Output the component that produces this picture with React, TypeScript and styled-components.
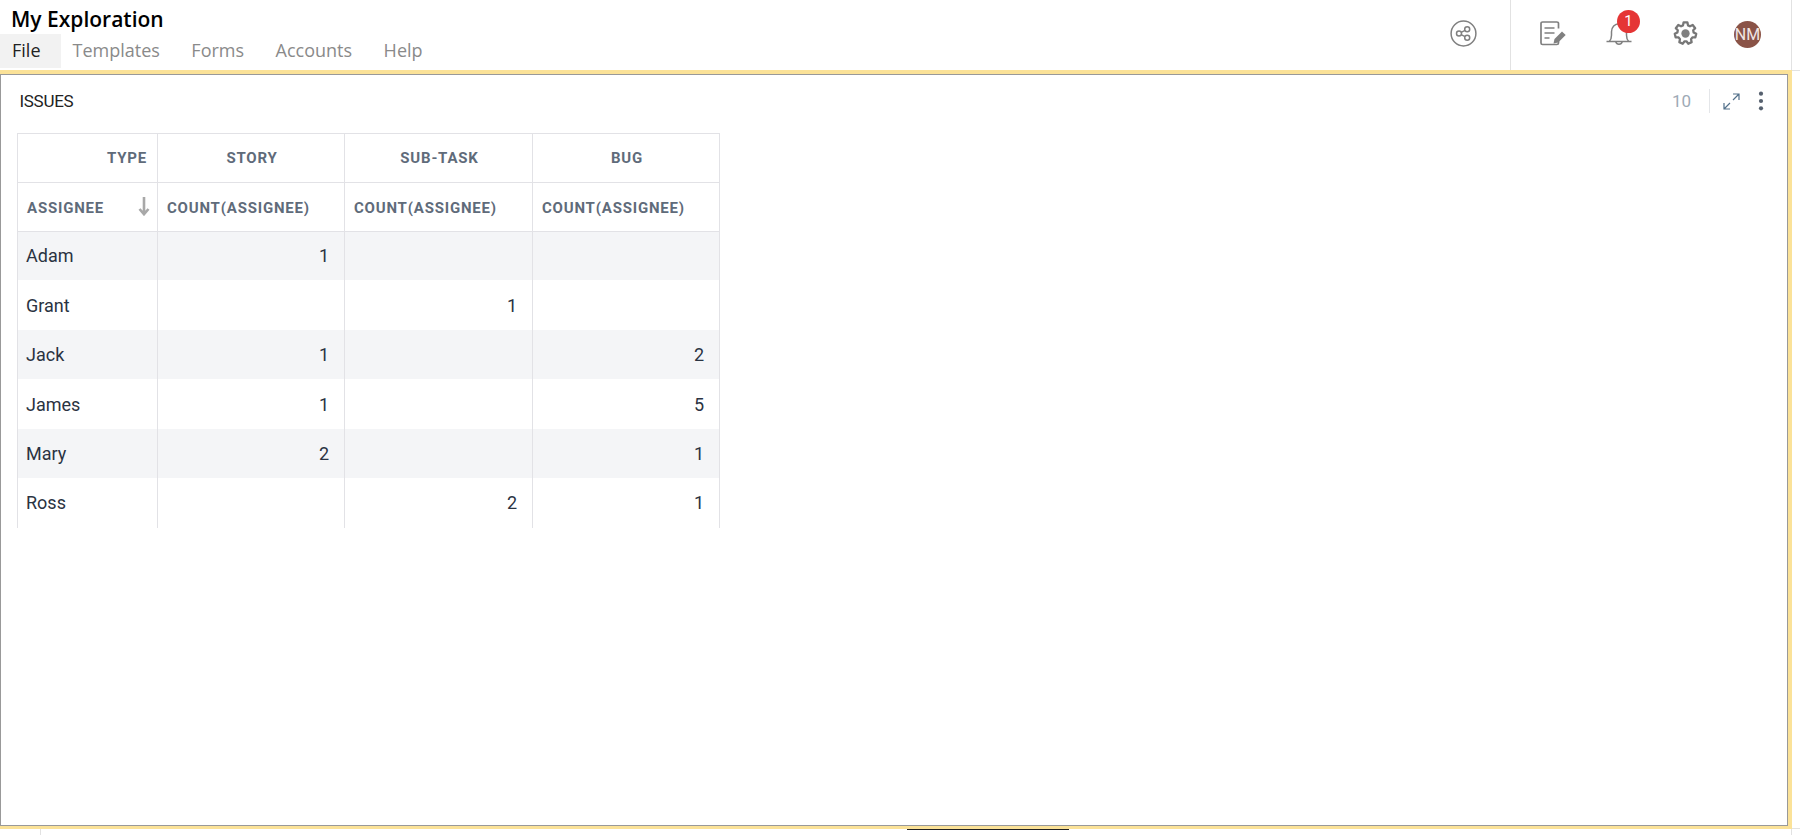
import React from "react";
import styled, { createGlobalStyle } from "styled-components";

const Global = createGlobalStyle`
  html, body { margin: 0; padding: 0; background: #fff; overflow: hidden; }
  body { font-family: "Roboto", "Liberation Sans", sans-serif; }
`;

const Page = styled.div`
  display: grid;
  grid-template-columns: 1792px 8px;
  grid-template-rows: 70px 759px 6px;
  width: 1800px;
  height: 835px;
`;

const Header = styled.header`
  display: flex;
  justify-content: space-between;
  border-right: 1px solid #e2e2e2;
`;

const Brand = styled.div`
  display: flex;
  flex-direction: column;
`;

const Title = styled.h1`
  margin: 0;
  padding: 5px 0 0 11px;
  height: 29px;
  font: 600 21px/29px "Open Sans", sans-serif;
  color: #000;
`;

const Menu = styled.nav`
  display: flex;
  height: 34px;
`;

const MenuItem = styled.div<{ $active?: boolean }>`
  display: flex;
  align-items: center;
  height: 34px;
  padding: ${(p) => (p.$active ? "0 20px 2px 12px" : "0 0 2px")};
  box-sizing: border-box;
  margin-right: ${(p) => (p.$active ? "12px" : "31.5px")};
  background: ${(p) => (p.$active ? "#f2f2f2" : "transparent")};
  color: ${(p) => (p.$active ? "#222" : "#8a8a8a")};
  font: 400 18px/32px "Open Sans", sans-serif;
`;

const Tools = styled.div`
  display: flex;
  align-items: stretch;
`;

const ShareBox = styled.div`
  width: 61px;
  padding-top: 20px;
  box-sizing: border-box;
  border-right: 1px solid #e2e2e2;
`;

const ToolRow = styled.div`
  display: flex;
  width: 280px;
  box-sizing: border-box;
  padding: 21px 0 0 29px;
`;

const ToolSlot = styled.div<{ $w: number }>`
  position: relative;
  width: ${(p) => p.$w}px;
  height: 30px;
`;

const Badge = styled.span`
  position: absolute;
  left: 11px;
  top: -11px;
  width: 23px;
  height: 23px;
  border-radius: 50%;
  background: #e53535;
  color: #fff;
  font: 400 15px/23px "Roboto", sans-serif;
  text-align: center;
`;

const Avatar = styled.div`
  width: 27px;
  height: 27px;
  border-radius: 50%;
  background: #8a5347;
  color: #f0e6e4;
  font: 400 16px/27px "Roboto", sans-serif;
  text-align: center;
  white-space: nowrap;
`;

const Panel = styled.main`
  border-style: solid;
  border-color: #fbe298;
  border-width: 4px 4px 3px 0;
  min-width: 0;
`;

const PanelInner = styled.div`
  height: 100%;
  box-sizing: border-box;
  border: 1px solid #999;
  background: #fff;
  padding-left: 16px;
`;

const PanelHead = styled.div`
  display: flex;
  align-items: center;
  height: 58px;
  padding-bottom: 6px;
  box-sizing: border-box;
`;

const PanelTitle = styled.div`
  flex: 1;
  padding-left: 2.5px;
  font: 400 17px/20px "Roboto", sans-serif;
  letter-spacing: -0.3px;
  color: #222;
`;

const Count = styled.span`
  font: 400 17px/20px "Roboto", sans-serif;
  color: #9eaab6;
  margin-right: 18px;
`;

const VRule = styled.span`
  width: 1px;
  height: 24px;
  background: #e4e6e9;
  margin-right: 13px;
`;

const Kebab = styled.span`
  display: flex;
  margin: 0 23px 0 18px;
`;

const Table = styled.div`
  display: grid;
  grid-template-columns: 140px 187px 188px 187px;
  grid-template-rows: 49px 48px;
  grid-auto-rows: 49.45px;
  width: 702px;
  border-left: 1px solid #e2e2e6;
  border-top: 1px solid #e2e2e6;
`;

const headPadding = { left: "2px 8px 0 9px", center: "0 8px 0 10px", right: "0 10px 0 8px" };

const HeadCell = styled.div<{ $align: "left" | "center" | "right" }>`
  position: relative;
  z-index: 1;
  display: flex;
  align-items: center;
  justify-content: ${(p) => (p.$align === "left" ? "flex-start" : p.$align === "right" ? "flex-end" : "center")};
  margin-bottom: ${(p) => (p.$align === "left" ? "-1px" : "0")};
  padding: ${(p) => headPadding[p.$align]};
  box-sizing: border-box;
  border-right: 1px solid #e2e2e6;
  border-bottom: 1px solid #e2e2e6;
  background: #fff;
  font: 700 15px/18px "Roboto", sans-serif;
  letter-spacing: 0.8px;
  color: #5f6b7a;
  white-space: nowrap;
`;

const SortIcon = styled.span`
  position: absolute;
  right: 7px;
  top: 14px;
  display: flex;
`;

const Cell = styled.div<{ $alt: boolean; $num?: boolean }>`
  display: flex;
  align-items: center;
  justify-content: ${(p) => (p.$num ? "flex-end" : "flex-start")};
  padding: ${(p) => (p.$num ? "1px 15px 0 8px" : "1px 8px 0")};
  box-sizing: border-box;
  border-right: 1px solid #e2e2e6;
  background: ${(p) => (p.$alt ? "#f4f5f7" : "#fff")};
  font: 400 18px/24px "Roboto", sans-serif;
  color: #2a3342;
`;

const GutterTop = styled.div``;

const GutterMid = styled.div`
  border-top: 1px solid #e2e2e2;
  border-bottom: 1px solid #e2e2e2;
`;

const GutterEnd = styled.div``;

const Footer = styled.footer`
  display: flex;
  align-items: flex-start;
  border-right: 1px solid #e2e2e2;
`;

const FooterStub = styled.div`
  width: 40px;
  height: 100%;
  border-right: 1px solid #e2e2e2;
`;

const FooterBar = styled.div`
  width: 162px;
  height: 1px;
  margin-left: 866px;
  background: #222;
`;

const ShareIcon = () => (
  <svg width="27" height="27" viewBox="0 0 27 27" fill="none" stroke="#808080" strokeWidth="1.5">
    <circle cx="13.5" cy="13.5" r="12.4" />
    <circle cx="9" cy="13.5" r="2.5" />
    <circle cx="17.2" cy="9.2" r="2.5" />
    <circle cx="17.2" cy="17.8" r="2.5" />
    <path d="M11.2 12.3l3.8-2M11.2 14.7l3.8 2" />
  </svg>
);

const NoteIcon = () => (
  <svg width="27" height="25" viewBox="0 0 27 25" fill="none" stroke="#808080" strokeWidth="1.7">
    <path d="M18.5 7.5V2.6A1.6 1.6 0 0 0 16.9 1H2.6A1.6 1.6 0 0 0 1 2.6v19.3A1.6 1.6 0 0 0 2.6 23.5h14.3A1.6 1.6 0 0 0 18.5 21.9V20" />
    <path d="M4.5 7h10M4.5 12h10M4.5 17h5" />
    <path d="M13.5 22.5l1-4.5 7.5-7.5 3.7 3.5-7.5 7.5z" fill="#808080" stroke="none" />
  </svg>
);

const BellIcon = () => (
  <svg width="26" height="26" viewBox="0 0 26 26" fill="none" stroke="#808080" strokeWidth="1.5">
    <path d="M.5 20.5h25M3.2 20.5c1.6-1.4 2.3-3.6 2.3-6.2v-3.6c0-4.6 3.3-8 7.5-8s7.5 3.4 7.5 8v3.6c0 2.6.7 4.8 2.3 6.2" />
    <path d="M9.8 20.7a3.3 3.3 0 0 0 6.4 0" />
  </svg>
);

const GearIcon = () => (
  <svg width="25" height="25" viewBox="0 0 24 24" fill="none" stroke="#777" strokeWidth="2.2" strokeLinejoin="round">
    <path d="M10.2 1.3h3.6l.6 2.9 1.9.9 2.6-1.3 2.4 3.1-1.9 2 .4 2.1 2.5 1.3-.8 3.4-2.9.1-1.3 1.6.6 2.9-3.2 1.5-1.8-2.3h-1.8l-1.8 2.3-3.2-1.5.6-2.9-1.3-1.6-2.9-.1-.8-3.4 2.5-1.3.4-2.1-1.9-2 2.4-3.1 2.6 1.3 1.9-.9z" />
    <circle cx="12" cy="12" r="4" fill="#808080" stroke="none" />
  </svg>
);

const ExpandIcon = () => (
  <svg width="17" height="17" viewBox="0 0 17 17" fill="none" stroke="#52708a" strokeWidth="1.2">
    <path d="M10 1h6v6M16 1L10 7M1 10v6h6M1 16l6-6" />
  </svg>
);

const KebabIcon = () => (
  <svg width="6" height="20" viewBox="0 0 6 20" fill="#55606e">
    <circle cx="3" cy="2.7" r="2.1" />
    <circle cx="3" cy="10" r="2.1" />
    <circle cx="3" cy="17.3" r="2.1" />
  </svg>
);

const ArrowIcon = () => (
  <svg width="12" height="19" viewBox="0 0 12 19" fill="none" stroke="#a8a8a8" strokeWidth="2.6">
    <path d="M6 0v17M1.5 12L6 17.2 10.500 12" />
  </svg>
);

const rows: [string, string, string, string][] = [
  ["Adam", "1", "", ""],
  ["Grant", "", "1", ""],
  ["Jack", "1", "", "2"],
  ["James", "1", "", "5"],
  ["Mary", "2", "", "1"],
  ["Ross", "", "2", "1"],
];

export default function App() {
  return (
    <>
      <Global />
      <Page>
        <Header>
          <Brand>
            <Title>My Exploration</Title>
            <Menu>
              <MenuItem $active>File</MenuItem>
              <MenuItem>Templates</MenuItem>
              <MenuItem>Forms</MenuItem>
              <MenuItem>Accounts</MenuItem>
              <MenuItem>Help</MenuItem>
            </Menu>
          </Brand>
          <Tools>
            <ShareBox>
              <ShareIcon />
            </ShareBox>
            <ToolRow>
              <ToolSlot $w={66}>
                <NoteIcon />
              </ToolSlot>
              <ToolSlot $w={67}>
                <BellIcon />
                <Badge>1</Badge>
              </ToolSlot>
              <ToolSlot $w={61}>
                <GearIcon />
              </ToolSlot>
              <Avatar>NM</Avatar>
            </ToolRow>
          </Tools>
        </Header>
        <GutterTop />
        <Panel>
          <PanelInner>
            <PanelHead>
              <PanelTitle>ISSUES</PanelTitle>
              <Count>10</Count>
              <VRule />
              <ExpandIcon />
              <Kebab>
                <KebabIcon />
              </Kebab>
            </PanelHead>
            <Table>
              <HeadCell $align="right">TYPE</HeadCell>
              <HeadCell $align="center">STORY</HeadCell>
              <HeadCell $align="center">SUB-TASK</HeadCell>
              <HeadCell $align="center">BUG</HeadCell>
              <HeadCell $align="left">
                ASSIGNEE
                <SortIcon>
                  <ArrowIcon />
                </SortIcon>
              </HeadCell>
              <HeadCell $align="left">COUNT(ASSIGNEE)</HeadCell>
              <HeadCell $align="left">COUNT(ASSIGNEE)</HeadCell>
              <HeadCell $align="left">COUNT(ASSIGNEE)</HeadCell>
              {rows.map((r, i) =>
                r.map((v, j) => (
                  <Cell key={`${i}-${j}`} $alt={i % 2 === 0} $num={j > 0}>
                    {v}
                  </Cell>
                ))
              )}
            </Table>
          </PanelInner>
        </Panel>
        <GutterMid />
        <Footer>
          <FooterStub />
          <FooterBar />
        </Footer>
        <GutterEnd />
      </Page>
    </>
  );
}
